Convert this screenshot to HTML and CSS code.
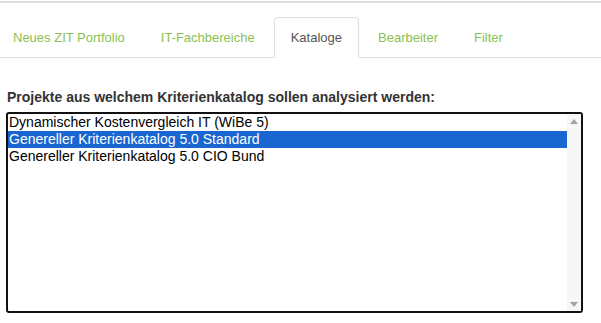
FILE: index.html
```html
<!DOCTYPE html>
<html lang="de">
<head>
    <meta charset="UTF-8">
    <meta name="viewport" content="width=device-width, initial-scale=1.0">
    <title>Kataloge</title>

    <link rel="stylesheet" href="styles.css">
</head>
<body>
    <div class="topline"></div>

    <ul class="tabs">
        <li><a href="#">Neues ZIT Portfolio</a></li>
        <li><a href="#">IT-Fachbereiche</a></li>
        <li class="active"><a href="#">Kataloge</a></li>
        <li><a href="#">Bearbeiter</a></li>
        <li><a href="#">Filter</a></li>
    </ul>

    <div class="panel">
        <label class="title">Projekte aus welchem Kriterienkatalog sollen analysiert werden:</label>

        <div class="listbox">
            <div class="options">
                <div class="option">Dynamischer Kostenvergleich IT (WiBe 5)</div>
                <div class="option selected">Genereller Kriterienkatalog 5.0 Standard</div>
                <div class="option">Genereller Kriterienkatalog 5.0 CIO Bund</div>
            </div>
            <div class="scrollbar">
                <span class="arrow up"></span>
                <span class="arrow down"></span>
            </div>
        </div>
    </div>
</body>
</html>
```

FILE: styles.css
```css
*{
    margin: 0;
    padding: 0;
    box-sizing: border-box;
}

body{
    font-family: "Liberation Sans", Arial, sans-serif;
    font-size: 13px;
    color: #333;
    background: #fff;
    width: 601px;
    height: 323px;
    overflow: hidden;
}

.topline{
    margin-top: 1px;
    height: 2px;
    background: #dedede;
}

.tabs{
    list-style: none;
    display: flex;
    margin-top: 14px;
    padding-left: 0;
    margin-left: -4px;
    border-bottom: 1px solid #ddd;
    height: 41px;
}

.tabs li{
    margin-right: 2px;
    margin-bottom: -1px;
}

.tabs a{
    display: block;
    padding: 10px 16px;
    line-height: 20px;
    height: 41px;
    border: 1px solid transparent;
    border-radius: 4px 4px 0 0;
    color: #8cc152;
    text-decoration: none;
}

.tabs .active a{
    color: #555;
    background: #fff;
    border-color: #ddd;
    border-bottom-color: transparent;
}

.panel{
    padding: 31px 18px 0 6px;
}

.title{
    display: block;
    font-size: 14px;
    font-weight: bold;
    line-height: 17px;
    padding-left: 1px;
    margin-bottom: 6px;
}

.listbox{
    display: flex;
    height: 201px;
    width: 577px;
    border: 2px solid #111;
    border-radius: 3px;
    background: #fff;
}

.options{
    flex: 1;
    color: #000;
    font-size: 14px;
}

.option{
    height: 17px;
    line-height: 17px;
    padding-left: 1px;
    white-space: nowrap;
}

.option.selected{
    background: #1a66d1;
    color: #fff;
}

.scrollbar{
    width: 14px;
    background: #f7f7f7;
    display: flex;
    flex-direction: column;
    justify-content: space-between;
    align-items: center;
    padding: 5px 0 4px;
}

.arrow{
    width: 0;
    height: 0;
    border-left: 4px solid transparent;
    border-right: 4px solid transparent;
}

.arrow.up{
    border-bottom: 5px solid #a3a3a3;
}

.arrow.down{
    border-top: 5px solid #a3a3a3;
}
```
